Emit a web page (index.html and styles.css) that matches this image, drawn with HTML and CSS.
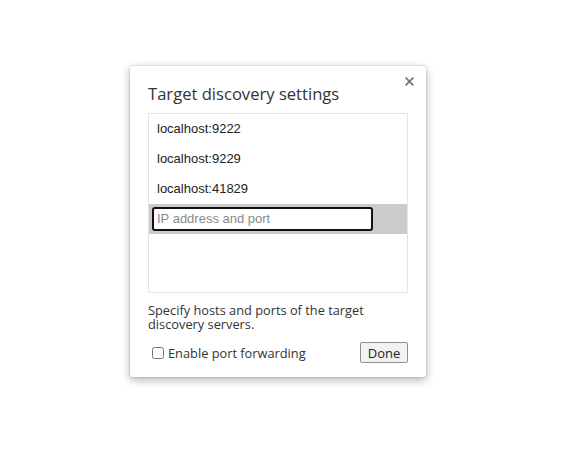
FILE: index.html
```html
<!DOCTYPE html>
<html>
<head>
<meta charset="utf-8">
<link rel="stylesheet" href="styles.css">
</head>
<body>
<div class="stage">
  <div class="dialog">
    <button class="close" aria-label="Close">
      <svg width="9" height="9" viewBox="0 0 9 9"><path d="M1.2 1.2 L7.8 7.8 M7.8 1.2 L1.2 7.8" stroke="#777" stroke-width="1.8" stroke-linecap="square"/></svg>
    </button>
    <div class="title">Target discovery settings</div>
    <div class="list">
      <div class="item">localhost:9222</div>
      <div class="item">localhost:9229</div>
      <div class="item">localhost:41829</div>
      <div class="item editing"><input class="field" type="text" placeholder="IP address and port"></div>
    </div>
    <div class="note">Specify hosts and ports of the target discovery servers.</div>
    <div class="footer">
      <label class="check"><input type="checkbox" class="box"><span>Enable port forwarding</span></label>
      <button class="done">Done</button>
    </div>
  </div>
</div>
</body>
</html>
```
FILE: styles.css
```css
html, body {
  margin: 0;
  padding: 0;
  background: #ffffff;
}
body {
  min-height: 100vh;
}
.stage {
  padding: 66px 0 60px 130px;
}
.dialog {
  position: relative;
  width: 296px;
  height: 311px;
  box-sizing: border-box;
  padding: 18px 18px 14px 18px;
  background: #fff;
  border-radius: 3px;
  box-shadow: 0 3px 10px rgba(0,0,0,0.3), 0 0 2px rgba(0,0,0,0.25);
  font-family: "Open Sans", "DejaVu Sans", sans-serif;
  color: #333;
  display: flex;
  flex-direction: column;
}
.close {
  position: absolute;
  top: 11px;
  right: 12px;
  width: 9px;
  height: 9px;
  padding: 0;
  border: 0;
  background: none;
  display: flex;
}
.title {
  font-size: 16.6px;
  line-height: 20px;
  height: 29px;
  color: #333;
}
.list {
  height: 180px;
  box-sizing: border-box;
  border: 1px solid #e4e4e4;
  font-family: "Liberation Sans", Arial, sans-serif;
  font-size: 13px;
  color: #222;
}
.item {
  height: 30px;
  box-sizing: border-box;
  display: flex;
  align-items: center;
  padding: 0 0 2px 8px;
}
.item.editing {
  background: #cbcbcb;
  padding: 0 0 0 3px;
}
.field {
  width: 221px;
  height: 24px;
  box-sizing: border-box;
  border: 2px solid #111;
  border-radius: 3px;
  padding: 0 0 1px 3px;
  font-family: "Liberation Sans", Arial, sans-serif;
  font-size: 13px;
  background: #fff;
  outline: none;
}
.field::placeholder {
  color: #8a8a8a;
}
.note {
  margin-top: 10px;
  font-size: 12.8px;
  line-height: 14px;
  color: #333;
}
.footer {
  margin-top: auto;
  display: flex;
  align-items: center;
  justify-content: space-between;
}
.check {
  display: flex;
  align-items: center;
  font-size: 12.8px;
  color: #333;
  padding-left: 4px;
}
.box {
  margin: 0 4px 0 0;
  width: 12px;
  height: 12px;
}
.done {
  width: 48px;
  height: 21px;
  padding: 0;
  font-family: "Open Sans", "DejaVu Sans", sans-serif;
  font-size: 13px;
  color: #222;
  background: #f2f2f2;
  border: 1px solid #8f8f8f;
  border-radius: 2px;
}
```
